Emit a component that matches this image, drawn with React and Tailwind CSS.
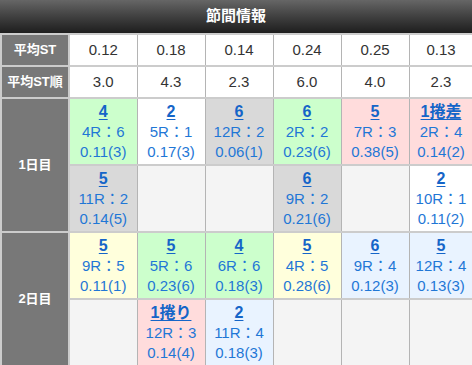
import React from 'react';

const bgMap = {
  green: 'bg-[#ccffcc]',
  white: 'bg-white',
  gray: 'bg-[#d9d9d9]',
  pink: 'bg-[#ffdcdc]',
  yellow: 'bg-[#ffffdc]',
  blue: 'bg-[#e9f3ff]',
  empty: 'bg-[#f4f4f4]',
};

const avgSt = ['0.12', '0.18', '0.14', '0.24', '0.25', '0.13'];
const avgRank = ['3.0', '4.3', '2.3', '6.0', '4.0', '2.3'];

const days = [
  {
    label: '1日目',
    rows: [
      [
        ['4', '4R：6', '0.11(3)', 'green'],
        ['2', '5R：1', '0.17(3)', 'white'],
        ['6', '12R：2', '0.06(1)', 'gray'],
        ['6', '2R：2', '0.23(6)', 'green'],
        ['5', '7R：3', '0.38(5)', 'pink'],
        ['1捲差', '2R：4', '0.14(2)', 'pink'],
      ],
      [
        ['5', '11R：2', '0.14(5)', 'gray'],
        null,
        null,
        ['6', '9R：2', '0.21(6)', 'gray'],
        null,
        ['2', '10R：1', '0.11(2)', 'white'],
      ],
    ],
  },
  {
    label: '2日目',
    rows: [
      [
        ['5', '9R：5', '0.11(1)', 'yellow'],
        ['5', '5R：6', '0.23(6)', 'green'],
        ['4', '6R：6', '0.18(3)', 'green'],
        ['5', '4R：5', '0.28(6)', 'yellow'],
        ['6', '9R：4', '0.12(3)', 'blue'],
        ['5', '12R：4', '0.13(3)', 'blue'],
      ],
      [
        null,
        ['1捲り', '12R：3', '0.14(4)', 'pink'],
        ['2', '11R：4', '0.18(3)', 'blue'],
        null,
        null,
        null,
      ],
    ],
  },
];

const cellBorder = 'border-x border-x-[#b4b4b4] border-y-2 border-y-[#cccccc]';

const RaceCell = ({ cell, h }) => {
  if (!cell) {
    return <td className={`${cellBorder} ${bgMap.empty} ${h}`} />;
  }
  const [rank, race, st, color] = cell;
  return (
    <td className={`${cellBorder} ${bgMap[color]} ${h} text-center align-middle p-0`}>
      <div className="text-[16px] leading-[20px] font-bold text-[#1565c8] underline underline-offset-2">{rank}</div>
      <div className="text-[15px] leading-[20px] text-[#1f77d6]">{race}</div>
      <div className="text-[15px] leading-[20px] text-[#1f77d6]">{st}</div>
    </td>
  );
};

const LabelCell = ({ children, rowSpan, h }) => (
  <td
    rowSpan={rowSpan}
    className={`border-2 border-[#cccccc] bg-[#787878] text-white font-bold text-[13px] text-center align-middle p-0 ${h || ''}`}
  >
    {children}
  </td>
);

export default function App() {
  return (
    <div
      className="w-[472px] h-[365px] overflow-hidden bg-white"
      style={{ fontFamily: '"Liberation Sans", "Noto Sans CJK JP", sans-serif' }}
    >
      <div className="h-[33px] flex items-center justify-center bg-gradient-to-b from-[#666666] to-[#1e1e1e] text-white font-bold text-[15px]">
        節間情報
      </div>
      <table className="w-[472px] table-fixed border-collapse">
        <colgroup>
          <col className="w-[68px]" />
          <col className="w-[68px]" />
          <col className="w-[68px]" />
          <col className="w-[68px]" />
          <col className="w-[68px]" />
          <col className="w-[68px]" />
          <col className="w-[64px]" />
        </colgroup>
        <tbody>
          <tr>
            <LabelCell h="h-[32px]">平均ST</LabelCell>
            {avgSt.map((v, i) => (
              <td key={i} className={`${cellBorder} h-[32px] text-center text-[15px] text-[#333333] p-0`}>{v}</td>
            ))}
          </tr>
          <tr>
            <LabelCell h="h-[32px]">平均ST順</LabelCell>
            {avgRank.map((v, i) => (
              <td key={i} className={`${cellBorder} h-[32px] text-center text-[15px] text-[#333333] p-0`}>{v}</td>
            ))}
          </tr>
          {days.map((day) =>
            day.rows.map((row, ri) => (
              <tr key={day.label + ri}>
                {ri === 0 && <LabelCell rowSpan={2}>{day.label}</LabelCell>}
                {row.map((cell, ci) => (
                  <RaceCell key={ci} cell={cell} h="h-[67px]" />
                ))}
              </tr>
            ))
          )}
        </tbody>
      </table>
    </div>
  );
}
